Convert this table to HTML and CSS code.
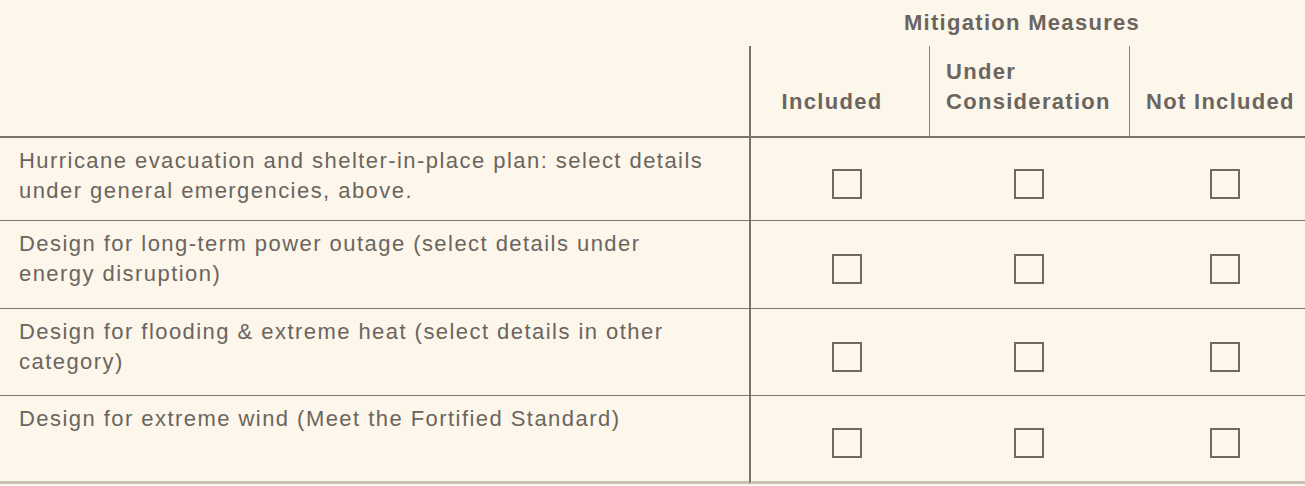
FILE: index.html
```html
<!DOCTYPE html>
<html>
<head>
<meta charset="utf-8">
<link rel="stylesheet" href="styles.css">
</head>
<body>
<div class="table">
  <div class="hcell title-blank"></div>
  <div class="hcell title">Mitigation Measures</div>

  <div class="hcell blank"></div>
  <div class="hcell col c2"><span class="center">Included</span></div>
  <div class="hcell col c3">Under<br>Consideration</div>
  <div class="hcell col c4">Not Included</div>

  <div class="cell label">Hurricane evacuation and shelter-in-place plan: select details under general emergencies, above.</div>
  <div class="cell box c2"><span class="cb"></span></div>
  <div class="cell box c3"><span class="cb"></span></div>
  <div class="cell box c4"><span class="cb"></span></div>

  <div class="cell label">Design for long-term power outage (select details under energy disruption)</div>
  <div class="cell box c2"><span class="cb"></span></div>
  <div class="cell box c3"><span class="cb"></span></div>
  <div class="cell box c4"><span class="cb"></span></div>

  <div class="cell label">Design for flooding &amp; extreme heat (select details in other category)</div>
  <div class="cell box c2"><span class="cb"></span></div>
  <div class="cell box c3"><span class="cb"></span></div>
  <div class="cell box c4"><span class="cb"></span></div>

  <div class="cell label last">Design for extreme wind (Meet the Fortified Standard)</div>
  <div class="cell box c2 last"><span class="cb"></span></div>
  <div class="cell box c3 last"><span class="cb"></span></div>
  <div class="cell box c4 last"><span class="cb"></span></div>
</div>
</body>
</html>
```
FILE: styles.css
```css
html, body {
  margin: 0;
  padding: 0;
  background: #fdf6ea;
}
body {
  font-family: "Liberation Sans", Arial, sans-serif;
  color: #6a655f;
  font-size: 22px;
  line-height: 30px;
  letter-spacing: 1.3px;
}
.table {
  display: grid;
  grid-template-columns: 749px 180px 200px 176px;
  grid-template-rows: 46px 92px 83px 88px 87px 88px;
}
.title {
  grid-column: 2 / 5;
  font-weight: bold;
  display: flex;
  justify-content: center;
  padding: 8px 10px 0 0;
}
.hcell.col {
  font-weight: bold;
  display: flex;
  flex-direction: column;
  justify-content: flex-end;
  padding: 0 0 19px 16px;
  border-bottom: 2px solid #7a7369;
}
.hcell.blank {
  border-bottom: 2px solid #7a7369;
}
.hcell.c2 {
  border-left: 2px solid #7a7369;
  align-items: center;
  padding-left: 0;
  padding-right: 16px;
}
.hcell.c3, .hcell.c4 {
  border-left: 1px solid #8c857a;
}
.cell {
  border-bottom: 1px solid #7a7369;
}
.cell.label {
  padding: 8px 40px 0 19px;
  letter-spacing: 1.45px;
}
.cell.box {
  display: flex;
  align-items: center;
  justify-content: center;
  padding-top: 9px;
}
.cell.box.c2 {
  border-left: 2px solid #7a7369;
  padding-left: 13px;
}
.cell.box.c4 {
  padding-left: 16px;
}
.cell.last {
  border-bottom: 3px solid #cbc1b3;
}
.cb {
  width: 26px;
  height: 26px;
  border: 2px solid #6f6a62;
  display: block;
}
```
